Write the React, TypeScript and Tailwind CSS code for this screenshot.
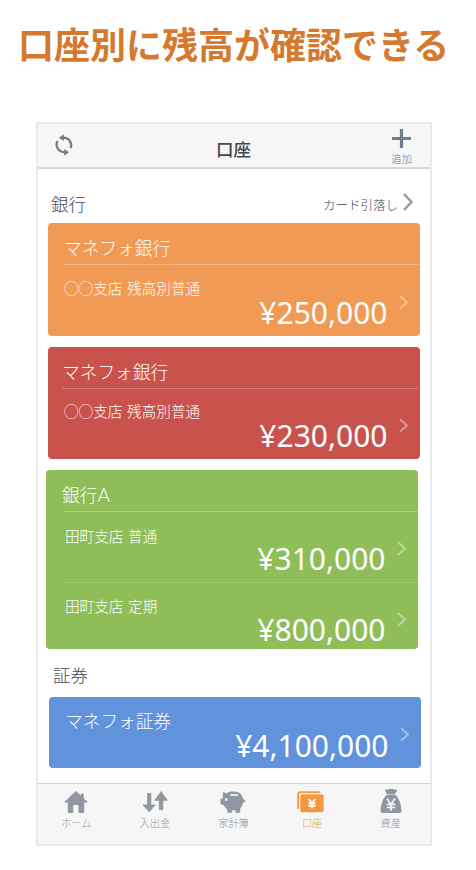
import React from 'react'
import clsx from 'clsx'

interface AccountRow {
  label?: string
  amount: string
  className: string
  labelClass: string
  amountClass: string
  chevronClass: string
}

interface AccountCardProps {
  title: React.ReactNode
  rows: AccountRow[]
  className: string
  titleClass: string
  lineClass: string
}

function Chevron({ className }: { className?: string }) {
  return (
    <svg viewBox="0 0 10 15" className={clsx('h-[15px] w-[10px]', className)} fill="none" stroke="currentColor" strokeWidth="2">
      <path d="M1 1.2 8 7.5 1 13.8" />
    </svg>
  )
}

function SyncIcon() {
  return (
    <svg viewBox="0 0 18 20" className="h-5 w-[18px] overflow-visible text-[#737b8f]" fill="none" stroke="currentColor" strokeWidth="2.2">
      <path d="M8 2.700C14 2.700 17.700 8 15.600 13.200" />
      <path d="M2.600 6C-.3 11.500 3.500 17.300 10 17.300" />
      <path d="M4 2.700 8.800-.7v6.800zM14 17.300 9.200 20.700v-6.800z" fill="currentColor" stroke="none" />
    </svg>
  )
}

function HomeIcon() {
  return (
    <svg viewBox="0 0 24 24" className="h-6 w-6" fill="currentColor">
      <path d="M12 1 .8 11.6c-.4.5-.2.9.4.9h2.6V22c0 .7.3 1 1 1h4.5v-7.2c0-.5.3-.8.8-.8h3.6c.5 0 .8.3.8.8V23h4.7c.7 0 1-.3 1-1v-9.5h2.6c.6 0 .8-.4.4-.9L19.8 8.4V3.7h-3v1.8z" />
    </svg>
  )
}

function TransferIcon() {
  return (
    <svg viewBox="0 0 26 24" className="h-6 w-[26px]" fill="currentColor" stroke="currentColor" strokeWidth=".8" strokeLinejoin="round">
      <path d="M5.500 3.500h3.400v11.400h4.300L7.200 21.800l-6.200-6.900h4.500zM17.300 19.600V10.300h-4.400L19.100 1.600l6.300 8.700h-4.500v9.300z" />
    </svg>
  )
}

function PiggyIcon() {
  return (
    <svg viewBox="0 0 26 24" className="h-6 w-[26px]" fill="currentColor">
      <path d="M3.200 1.800 6.400 3.500C8.200 2 10 1.500 13 1.500c5 0 9 1.900 10 7l2.600 2.700-2.600 1.800c-.6 2.500-1.500 4-2.800 5.300v4.500h-4.700v-2.600h-3.300v2.600H7.300v-3.400C6 18.600 5 17.300 4 15.500L.4 14.100V9.200l2.200-1z" />
      <path d="M10.300 5h7.400" stroke="#f6f6f6" strokeWidth="1.700" />
      <circle cx="6.200" cy="9.700" r="1.400" fill="#f6f6f6" />
    </svg>
  )
}

function WalletIcon() {
  return (
    <svg viewBox="0 0 27 24" className="h-6 w-[27px]">
      <path d="M1.200 19V4.200Q1.200 2.200 3.200 2.200H23.500" fill="none" stroke="currentColor" strokeWidth="1.800" />
      <rect x="3.300" y="4.300" width="23.300" height="18" rx="2" fill="currentColor" />
      <path d="m11.800 9 3.200 4.500L18.200 9M15 13.500v5M11.300 13.400h7.400M11.300 15.900h7.400" fill="none" stroke="#fff" strokeWidth="1.800" />
    </svg>
  )
}

function MoneyBagIcon() {
  return (
    <svg viewBox="0 0 22 26" className="h-[26px] w-[22px]" fill="currentColor">
      <path d="M4.800 1.600C8 2.300 8.300.4 11 .9c2.700-.5 3 1.400 6.300.7-.5 2.200-1.300 3.300-2.500 4.300H7.300C6 4.900 5.200 3.800 4.800 1.600zM7 6.600h8c4 3.500 6 9 6.500 15.900 0 1.800-.7 2.500-2.200 2.500H2.700C1.200 25 .5 24.300.5 22.500 1 16 3 10.100 7 6.600z" />
      <path d="m7 10.500 4 6 4-6M11 16v6.800M6.800 16.300h8.400M6.800 19.300h8.400" fill="none" stroke="#f6f6f6" strokeWidth="1.700" />
    </svg>
  )
}

function AccountCard({ title, rows, className, titleClass, lineClass }: AccountCardProps) {
  return (
    <section className={clsx('w-[372px] overflow-hidden rounded text-white', className)}>
      <h2 className={clsx('text-[17.7px] font-light whitespace-nowrap', titleClass)}>{title}</h2>
      {rows.map((row, index) => (
        <React.Fragment key={index}>
          {row.label && <div className={clsx('h-px', lineClass, index === 0 ? 'bg-white/25' : 'bg-white/12')} />}
          <div className={clsx('flex', row.className)}>
            {row.label && (
              <span className={clsx('text-[14.6px] leading-5 font-light whitespace-nowrap [word-spacing:1.500px]', row.labelClass)}>
                {row.label}
              </span>
            )}
            <span className={clsx("ml-auto font-['Noto_Sans'] text-[30px] leading-[30px] whitespace-nowrap", row.amountClass)}>
              {row.amount}
            </span>
            <Chevron className={clsx('mr-[11px] ml-[11.500px] text-white/40', row.chevronClass)} />
          </div>
        </React.Fragment>
      ))}
    </section>
  )
}

const tabs = [
  { label: 'ホーム', icon: <HomeIcon /> },
  { label: '入出金', icon: <TransferIcon /> },
  { label: '家計簿', icon: <PiggyIcon /> },
  { label: '口座', icon: <WalletIcon />, active: true },
  { label: '資産', icon: <MoneyBagIcon /> }
]

export default function App() {
  return (
    <div className="h-[870px] w-[476px] overflow-hidden bg-white font-['Noto_Sans_CJK_JP',sans-serif]">
      <h1 className="h-[122px] pt-[17px] pl-[18px] text-[36px] leading-[52px] font-bold whitespace-nowrap text-[#d5792f]">
        口座別に残高が確認できる
      </h1>

      <div className="ml-9 flex h-[724px] w-[396px] flex-col border-2 border-[#ebebeb] bg-white">
        {/* Header */}
        <header className="flex h-[45px] shrink-0 justify-between border-b-2 border-[#d8d8d8] bg-[#f6f6f6]">
          <div className="w-[60px] pt-[11px] pl-[17px]">
            <SyncIcon />
          </div>
          <div className="pt-[13px] pr-px text-[17.5px] leading-6 font-medium text-[#444650]">口座</div>
          <div className="flex w-[60px] flex-col items-center pt-[5px] pl-[3px] text-[#737b8f]">
            <svg viewBox="0 0 19 19" className="h-[19px] w-[19px]" stroke="currentColor" strokeWidth="3.200">
              <path d="M9.500 0v19M0 9.500h19" />
            </svg>
            <span className="mt-1 text-[10.500px] leading-[14px] font-light">追加</span>
          </div>
        </header>

        {/* Accounts */}
        <main className="flex-1">
          <div className="flex h-[54px] items-start pt-[23px] pl-[13px] text-[#45474f]">
            <span className="text-[17.5px] leading-6 font-light">銀行</span>
            <span className="mt-[3px] ml-auto text-[12.5px] leading-5 font-light">カード引落し</span>
            <svg viewBox="0 0 10 18" className="mt-px mr-[17px] ml-[5px] h-[18px] w-[10px] text-[#999]" fill="none" stroke="currentColor" strokeWidth="2.500">
              <path d="M1 1l7.500 8L1 17" />
            </svg>
          </div>

          <AccountCard
            title="マネフォ銀行"
            className="ml-[10px] h-[113px] bg-[#f09a56]"
            titleClass="h-[41px] pl-4 pt-3 leading-6"
            lineClass="ml-4"
            rows={[
              { label: '◯◯支店 残高別普通', amount: '¥250,000', className: 'h-[71px] pl-4', labelClass: 'mt-[13px]', amountClass: 'mt-[33px]', chevronClass: 'mt-[30px]' }
            ]}
          />
          <AccountCard
            title="マネフォ銀行"
            className="mt-[11px] ml-[10px] h-[112px] bg-[#c9524d]"
            titleClass="h-[41px] pl-[14px] pt-3 leading-6"
            lineClass="ml-[14px] mr-0.5"
            rows={[
              { label: '◯◯支店 残高別普通', amount: '¥230,000', className: 'h-[70px] pl-4', labelClass: 'mt-[12px]', amountClass: 'mt-[32px]', chevronClass: 'mt-[29px]' }
            ]}
          />
          <AccountCard
            title={<>銀行<span className="font-['Lato'] text-[19px] leading-none">A</span></>}
            className="mt-[11px] ml-2 h-[179px] bg-[#8fbe59]"
            titleClass="h-[41px] pl-4 pt-3 leading-6"
            lineClass="ml-[18px]"
            rows={[
              { label: '田町支店 普通', amount: '¥310,000', className: 'h-[70px] pl-[19px]', labelClass: 'mt-[14px]', amountClass: 'mt-[32px]', chevronClass: 'mt-[29px]' },
              { label: '田町支店 定期', amount: '¥800,000', className: 'h-[66px] pl-[19px]', labelClass: 'mt-[13px]', amountClass: 'mt-[32px]', chevronClass: 'mt-[29px]' }
            ]}
          />
          <div className="h-12 pt-[14px] pl-[15px] text-[17.500px] leading-6 font-light text-[#45474f]">証券</div>
          <AccountCard
            title="マネフォ証券"
            className="ml-[11px] h-[71px] bg-[#6093db]"
            titleClass="h-[36px] pl-4 pt-[11px] leading-6"
            lineClass="hidden"
            rows={[
              { amount: '¥4,100,000', className: 'h-[35px]', labelClass: '', amountClass: 'mt-[-2px]', chevronClass: 'mt-[-6px]' }
            ]}
          />
        </main>

        {/* Tab bar */}
        <nav className="flex h-[61px] shrink-0 border-t border-[#cfcfcf] bg-[#f6f6f6]">
          {tabs.map((tab) => (
            <div
              key={tab.label}
              className={clsx('flex w-[78.600px] shrink-0 flex-col items-center pr-[2px]', tab.active ? 'text-[#f19a42]' : 'text-[#9197a2]')}
            >
              <div className={clsx('flex h-[31px] items-end pb-px', tab.active && 'pr-[3px]')}>{tab.icon}</div>
              <span className="text-[10.200px] leading-4 font-light whitespace-nowrap">{tab.label}</span>
            </div>
          ))}
        </nav>
      </div>
    </div>
  )
}
